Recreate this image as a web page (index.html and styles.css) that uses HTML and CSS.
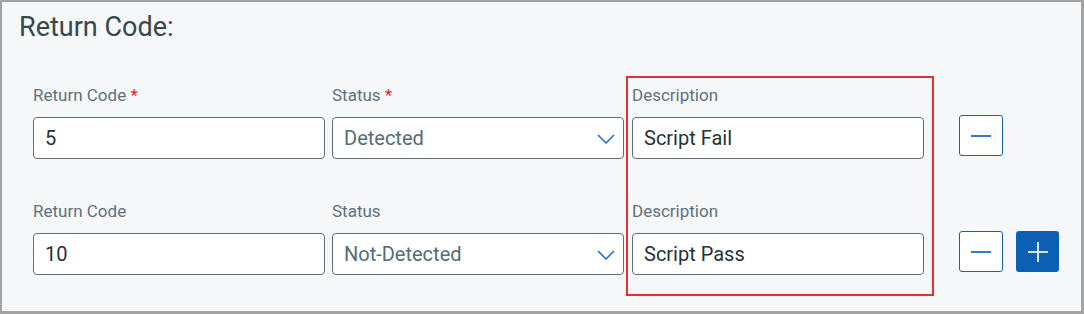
FILE: index.html
```html
<!DOCTYPE html>
<html>
<head>
<meta charset="utf-8">
<link rel="stylesheet" href="styles.css">
</head>
<body>
<div class="panel">
  <h2 class="title">Return Code:</h2>
  <div class="rows">
    <div class="row">
      <div class="field col1">
        <div class="label">Return Code <span class="req">*</span></div>
        <div class="input">5</div>
      </div>
      <div class="field col2">
        <div class="label">Status <span class="req">*</span></div>
        <div class="input select"><span class="muted">Detected</span>
          <svg class="chev" width="18" height="10" viewBox="0 0 18 10"><path d="M1 1 L9 9 L17 1" fill="none" stroke="#1f6fc2" stroke-width="1.5"/></svg>
        </div>
      </div>
      <div class="field col3">
        <div class="label">Description</div>
        <div class="input">Script Fail</div>
      </div>
      <div class="actions">
        <button class="btn outline"><span class="hline"></span></button>
      </div>
    </div>
    <div class="row">
      <div class="field col1">
        <div class="label">Return Code</div>
        <div class="input">10</div>
      </div>
      <div class="field col2">
        <div class="label">Status</div>
        <div class="input select"><span class="muted">Not-Detected</span>
          <svg class="chev" width="18" height="10" viewBox="0 0 18 10"><path d="M1 1 L9 9 L17 1" fill="none" stroke="#1f6fc2" stroke-width="1.5"/></svg>
        </div>
      </div>
      <div class="field col3">
        <div class="label">Description</div>
        <div class="input">Script Pass</div>
      </div>
      <div class="actions">
        <button class="btn outline"><span class="hline"></span></button>
        <button class="btn solid"><span class="hline"></span><span class="vline"></span></button>
      </div>
    </div>
  </div>
  <div class="highlight"></div>
</div>
</body>
</html>
```
FILE: styles.css
```css
* { box-sizing: border-box; }
html, body { margin: 0; padding: 0; background: #f6f7f9; }
.panel {
  position: relative;
  width: 1084px;
  height: 314px;
  border: 2px solid #a3a3a3;
  border-right-width: 3px;
  border-bottom-width: 3px;
  background: #f6f7f9;
  font-family: Roboto, "Liberation Sans", sans-serif;
  padding: 10px 0 0 17px;
}
.title {
  margin: 0;
  font-size: 27px;
  line-height: 30px;
  font-weight: 400;
  color: #36474f;
}
.rows {
  margin-top: 43px;
  padding-left: 14px;
  display: flex;
  flex-direction: column;
  gap: 42px;
}
.row {
  display: flex;
  align-items: flex-start;
}
.field { width: 292px; display: flex; flex-direction: column; gap: 12px; }
.col1 { margin-right: 7px; }
.col2 { margin-right: 8px; }
.label {
  font-size: 17px;
  line-height: 20px;
  color: #5d717d;
}
.req { color: #e0281f; }
.input {
  height: 42px;
  border: 1px solid #5d6e7a;
  border-radius: 4px;
  background: #fff;
  padding: 0 11px;
  display: flex;
  align-items: center;
  font-size: 20px;
  color: #263238;
}
.select { justify-content: space-between; padding-right: 8px; }
.muted { color: #566b77; }
.chev { display: block; margin-top: 1px; }
.actions {
  display: flex;
  gap: 13px;
  margin-left: 35px;
  margin-top: 30px;
}
.btn {
  position: relative;
  width: 44px;
  height: 41px;
  border-radius: 3px;
  padding: 0;
  display: flex;
  align-items: center;
  justify-content: center;
}
.btn.outline { border: 1.5px solid #1a5fb0; background: #fff; }
.btn.solid { border: none; background: #0b5fb5; width: 43px; }
.hline { display: block; width: 20px; height: 2px; background: #3a78c0; }
.solid .hline { background: #dbe6f4; }
.vline {
  position: absolute;
  left: 50%;
  top: 50%;
  width: 2px;
  height: 20px;
  margin: -10px 0 0 -1px;
  background: #dbe6f4;
}
.highlight {
  position: absolute;
  left: 624px;
  top: 74px;
  width: 308px;
  height: 220px;
  border: 2px solid #e53030;
  pointer-events: none;
}
```
